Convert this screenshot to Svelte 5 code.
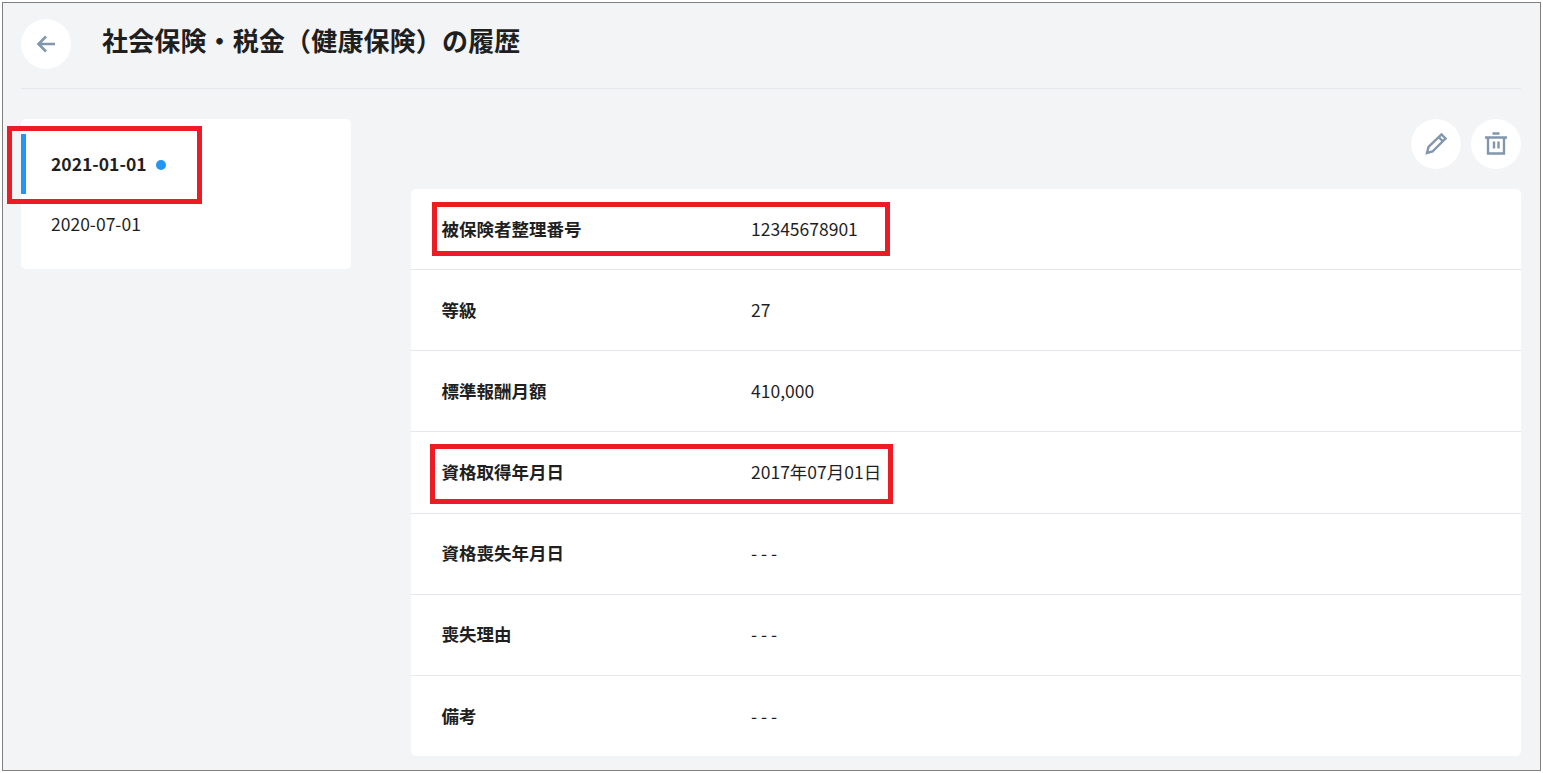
<script lang="ts">
  const history = [
    { date: "2021-01-01", current: true },
    { date: "2020-07-01", current: false },
  ];

  const rows = [
    { label: "被保険者整理番号", value: "12345678901", mark: "first" },
    { label: "等級", value: "27" },
    { label: "標準報酬月額", value: "410,000" },
    { label: "資格取得年月日", value: "2017年07月01日", mark: "second" },
    { label: "資格喪失年月日", value: "- - -" },
    { label: "喪失理由", value: "- - -" },
    { label: "備考", value: "- - -" },
  ];
</script>

<div class="frame">
  <header class="head">
    <button class="round" aria-label="戻る">
      <svg width="24" height="24" viewBox="0 0 24 24" fill="none" stroke="#8296ad" stroke-width="2.6">
        <path d="M21 12H5M12 4.500L4.500 12l7.500 7.500" />
      </svg>
    </button>
    <h1>社会保険・税金（健康保険）の履歴</h1>
  </header>

  <div class="body">
    <aside class="dates">
      {#each history as item}
        <div class="date" class:current={item.current}>
          <span>{item.date}</span>
          {#if item.current}
            <i class="dot"></i>
            <b class="mark mark-date"></b>
          {/if}
        </div>
      {/each}
    </aside>

    <main class="detail">
      <div class="actions">
        <button class="round" aria-label="編集">
          <svg width="24" height="24" viewBox="0 0 24 24" fill="none" stroke="#8296ad" stroke-width="2.4">
            <path d="M3 21l1.500-6L17.500 2.500l4 4L8.500 19.500z" />
            <path d="M15 5.500l3.500 3.500" />
          </svg>
        </button>
        <button class="round" aria-label="削除">
          <svg width="24" height="24" viewBox="0 0 24 24" fill="none" stroke="#8296ad" stroke-width="2.4">
            <path d="M1 5.500h22M8.500 1.500h7" />
            <path d="M4 5.500V21.500h16V5.500" />
            <path d="M10 9.500v7M14.500 9.500v7" />
          </svg>
        </button>
      </div>

      <dl class="card">
        {#each rows as row}
          <div class="row">
            <dt>{row.label}</dt>
            <dd>{row.value}</dd>
            {#if row.mark}
              <b class="mark mark-{row.mark}"></b>
            {/if}
          </div>
        {/each}
      </dl>
    </main>
  </div>
</div>

<style>
  :global(body) {
    background: #fff;
  }

  .frame {
    background: #f3f4f6;
    border: 1px solid #808080;
    box-sizing: border-box;
    color: #1f1f1f;
    font-family: "Noto Sans CJK JP", "Noto Sans", sans-serif;
    height: 769px;
    margin: 2px;
    padding: 16px 19px 0 18px;
    width: 1539px;
  }

  .head {
    align-items: flex-start;
    border-bottom: 1px solid #e4e7eb;
    box-sizing: border-box;
    display: flex;
    gap: 31px;
    height: 70px;
  }

  h1 {
    font-size: 26px;
    font-weight: 700;
    letter-spacing: 0.006em;
    line-height: 42px;
    margin: 0;
  }

  .round {
    align-items: center;
    background: #fff;
    border: 0;
    border-radius: 50%;
    display: flex;
    flex: none;
    height: 50px;
    justify-content: center;
    padding: 0;
    width: 50px;
  }

  .body {
    display: flex;
    gap: 60px;
    padding-top: 30px;
  }

  .dates {
    background: #fff;
    border-radius: 5px;
    box-sizing: border-box;
    flex: none;
    height: 150px;
    padding: 15px 0;
    width: 330px;
  }

  .date {
    align-items: center;
    box-sizing: border-box;
    display: flex;
    font-size: 17.5px;
    gap: 9.5px;
    height: 60px;
    padding-left: 30px;
    position: relative;
  }

  .date span {
    margin-bottom: 2px;
  }

  .date.current {
    border-left: 5px solid #2196f3;
    font-weight: 700;
    padding-left: 25px;
  }

  .dot {
    background: #2196f3;
    border-radius: 50%;
    height: 10px;
    margin-top: 1px;
    width: 10px;
  }

  .detail {
    flex: 1;
    min-width: 0;
  }

  .actions {
    display: flex;
    gap: 10px;
    height: 70px;
    justify-content: flex-end;
  }

  .card {
    background: #fff;
    border-radius: 5px;
    margin: 0;
  }

  .row {
    align-items: center;
    border-top: 1px solid #e4e7eb;
    box-sizing: border-box;
    display: flex;
    font-size: 17.5px;
    height: 81.2px;
    padding-bottom: 2px;
    padding-left: 30.5px;
    position: relative;
  }

  .row:first-child {
    border-top: 0;
    height: 80px;
  }

  dt {
    flex: none;
    font-weight: 700;
    width: 309.5px;
  }

  dd {
    margin: 0;
  }

  /* 説明用の赤枠 */
  .mark {
    border: 5px solid #ed1c24;
    box-sizing: border-box;
    pointer-events: none;
    position: absolute;
  }

  .mark-date {
    height: 78px;
    left: -19px;
    top: -8px;
    width: 195px;
  }

  .mark-first {
    height: 54px;
    left: 21px;
    top: 13px;
    width: 458px;
  }

  .mark-second {
    height: 60px;
    left: 19px;
    top: 12px;
    width: 463px;
  }
</style>
